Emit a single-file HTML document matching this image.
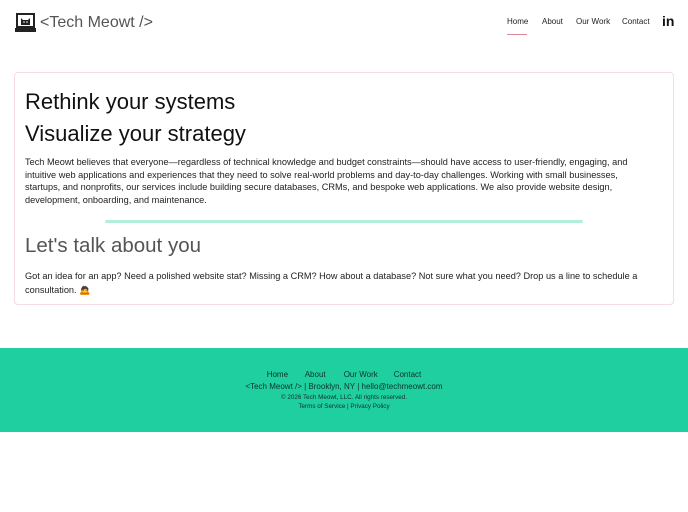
<!DOCTYPE html>
<html><head><meta charset="utf-8"><style>
*{margin:0;padding:0;box-sizing:border-box}
body{width:688px;height:512px;background:#fff;font-family:"Liberation Sans",sans-serif;color:#111;position:relative;overflow:hidden}
.logo{position:absolute;left:15px;top:13px;display:flex;align-items:center}
.logo .t{font-size:16px;color:#555;margin-left:4px;font-weight:300}
.nav{position:absolute;top:17px;font-size:8px;color:#222}
.ul{position:absolute;left:507px;top:34px;width:20px;height:1px;background:#d9879a}
.card{position:absolute;left:14px;top:72px;width:660px;height:233px;border:1px solid #f7dce2;border-radius:4px}
h1{position:absolute;left:25px;font-size:22px;font-weight:normal;color:#111;white-space:nowrap}
.p{position:absolute;left:25px;width:620px;font-size:9.2px;line-height:12.7px;color:#222}
.div{position:absolute;left:105px;top:220px;width:478px;height:3px;background:#b3f0dc;border-radius:2px}
.foot{position:absolute;left:0;top:348px;width:688px;height:84px;background:#20cfa0;color:#0b3328;text-align:center}
.foot div{position:absolute;left:0;width:100%;white-space:nowrap}
.foot span{display:inline-block}
</style></head><body>
<div class="logo">
<svg width="21" height="20" viewBox="0 0 21 20"><rect x="1" y="0" width="19" height="15" fill="#222"/><rect x="3" y="2" width="15" height="11" fill="#fff"/><path d="M6 12 L6 5 L8 7 L13 7 L15 5 L15 12 Z" fill="#222"/><circle cx="9" cy="9" r="0.8" fill="#fff"/><circle cx="12" cy="9" r="0.8" fill="#fff"/><rect x="0" y="15" width="21" height="4" fill="#222"/></svg>
<span class="t">&lt;Tech Meowt /&gt;</span></div>
<div class="nav" style="left:507px">Home</div>
<div class="nav" style="left:542px">About</div>
<div class="nav" style="left:576px">Our Work</div>
<div class="nav" style="left:622px">Contact</div>
<div class="ul"></div>
<div style="position:absolute;left:662px;top:13px;font-size:14px;font-weight:bold;color:#111">in</div>
<div class="card"></div>
<h1 style="top:89px">Rethink your systems</h1>
<h1 style="top:121px">Visualize your strategy</h1>
<div class="p" style="top:156px">Tech Meowt believes that everyone—regardless of technical knowledge and budget constraints—should have access to user-friendly, engaging, and intuitive web applications and experiences that they need to solve real-world problems and day-to-day challenges. Working with small businesses, startups, and nonprofits, our services include building secure databases, CRMs, and bespoke web applications. We also provide website design, development, onboarding, and maintenance.</div>
<div class="div"></div>
<h1 style="top:234px;font-size:20.5px;color:#555">Let's talk about you</h1>
<div class="p" style="top:269px;line-height:14px">Got an idea for an app? Need a polished website stat? Missing a CRM? How about a database? Not sure what you need? Drop us a line to schedule a consultation. 🙇</div>
<div class="foot">
<div style="top:22px;font-size:8px"><span style="width:38px;text-align:left">Home</span><span style="width:39px;text-align:left">About</span><span style="width:50px;text-align:left">Our Work</span><span>Contact</span></div>
<div style="top:34px;font-size:8px">&lt;Tech Meowt /&gt; | Brooklyn, NY | hello@techmeowt.com</div>
<div style="top:46px;font-size:6.3px">© 2026 Tech Meowt, LLC. All rights reserved.</div>
<div style="top:55px;font-size:6.3px">Terms of Service | Privacy Policy</div>
</div>
</body></html>
